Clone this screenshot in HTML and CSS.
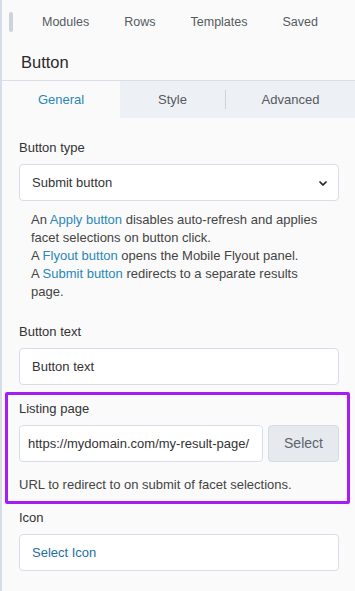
FILE: index.html
```html
<!DOCTYPE html>
<html lang="en">
<head>
  <meta charset="utf-8">
  <meta name="viewport" content="width=device-width, initial-scale=1">
  <title>Button settings</title>
  <link rel="stylesheet" href="styles.css">
</head>
<body>
  <div class="panel">
    <div class="topbar">
      <span class="handle"></span>
      <nav class="nav">
        <span>Modules</span>
        <span>Rows</span>
        <span>Templates</span>
        <span>Saved</span>
      </nav>
    </div>

    <div class="heading">Button</div>

    <div class="tabs">
      <div class="tab active">General</div>
      <div class="tab">Style</div>
      <div class="tab last">Advanced</div>
    </div>

    <div class="form">
      <!-- Button type -->
      <div class="field has-help">
        <label class="label">Button type</label>
        <div class="select-box">
          <span>Submit button</span>
          <svg class="chevron" width="8" height="5" viewBox="0 0 8 5">
            <path d="M1 1l3 3 3-3" fill="none" stroke="#222" stroke-width="1.7" stroke-linecap="round" stroke-linejoin="round"/>
          </svg>
        </div>
        <p class="help">
          An <a>Apply button</a> disables auto-refresh and applies facet selections on button click.<br>
          A <a>Flyout button</a> opens the Mobile Flyout panel.<br>
          A <a>Submit button</a> redirects to a separate results page.
        </p>
      </div>

      <!-- Button text -->
      <div class="field">
        <label class="label">Button text</label>
        <div class="input">Button text</div>
      </div>

      <!-- Listing page (highlighted) -->
      <div class="field highlight">
        <label class="label">Listing page</label>
        <div class="input-row">
          <div class="input url">https://mydomain.com/my-result-page/</div>
          <div class="btn">Select</div>
        </div>
        <p class="help plain">URL to redirect to on submit of facet selections.</p>
      </div>

      <!-- Icon -->
      <div class="field">
        <label class="label">Icon</label>
        <div class="input link">Select Icon</div>
      </div>
    </div>
  </div>
</body>
</html>
```

FILE: styles.css
```css
body {
  margin: 0;
  padding: 0;
  background-color: #fafafa;
  font-family: "Liberation Sans", Arial, sans-serif;
  color: #333;
  overflow: hidden;
}

.panel {
  border-left: 2px solid #d6dce8;
  min-height: 591px;
  box-sizing: border-box;
}

.topbar {
  display: flex;
  align-items: center;
  height: 44px;
}

.handle {
  width: 4px;
  height: 20px;
  margin-left: 7px;
  border-radius: 2px;
  background-color: #cdd3da;
}

.nav {
  display: flex;
  gap: 35px;
  margin-left: 29px;
  font-size: 12.5px;
  color: #555a61;
}

.heading {
  height: 36px;
  padding-left: 19px;
  font-size: 16.5px;
  line-height: 36px;
  color: #2b2b2b;
}

.tabs {
  display: flex;
  height: 37px;
  border-top: 1px solid #d8dfe9;
  background-color: #edf0f4;
}

.tab {
  flex: 0 0 105px;
  font-size: 13px;
  line-height: 37px;
  text-align: center;
  color: #555a61;
}

.tab.active {
  flex: 0 0 118px;
  background-color: #fafafa;
  color: #2a87b8;
}

.tab.last {
  flex: 1;
  border-left: 1px solid #cdd3db;
  line-height: 19px;
  margin: 9px 0;
}

/* form */
.form {
  padding: 22px 16px 0 17px;
}

.field {
  margin-bottom: 7px;
}

.field.has-help {
  margin-bottom: 23px;
}

.label {
  display: block;
  font-size: 13px;
  line-height: 16px;
  margin-bottom: 8px;
  color: #333;
}

.select-box,
.input {
  display: flex;
  align-items: center;
  justify-content: space-between;
  height: 37px;
  box-sizing: border-box;
  padding: 0 12px;
  background-color: #fff;
  border: 1px solid #d7dee8;
  border-radius: 4px;
  font-size: 13px;
  color: #333;
}

.select-box {
  padding-right: 11px;
}

.chevron {
  margin-top: 1px;
}

.help {
  margin: 10px 20px 0 12px;
  font-size: 13px;
  line-height: 18px;
  color: #444;
}

.help a {
  color: #2a87b8;
}

.help.plain {
  margin: 14px 0 0 0;
}

.highlight {
  margin: 0 -11px 6px -14px;
  padding: 6px 8px 7px 11px;
  border: 3px solid #a61cf3;
  border-radius: 2px;
}

.input-row {
  display: flex;
  gap: 5px;
}

.input.url {
  flex: 1;
  padding: 0 8px;
}

.btn {
  width: 71px;
  height: 37px;
  box-sizing: border-box;
  border: 1px solid #d5dbe3;
  border-radius: 4px;
  background-color: #e6e9ee;
  font-size: 14px;
  line-height: 35px;
  text-align: center;
  color: #5d636b;
}

.input.link {
  color: #23709f;
}
```
